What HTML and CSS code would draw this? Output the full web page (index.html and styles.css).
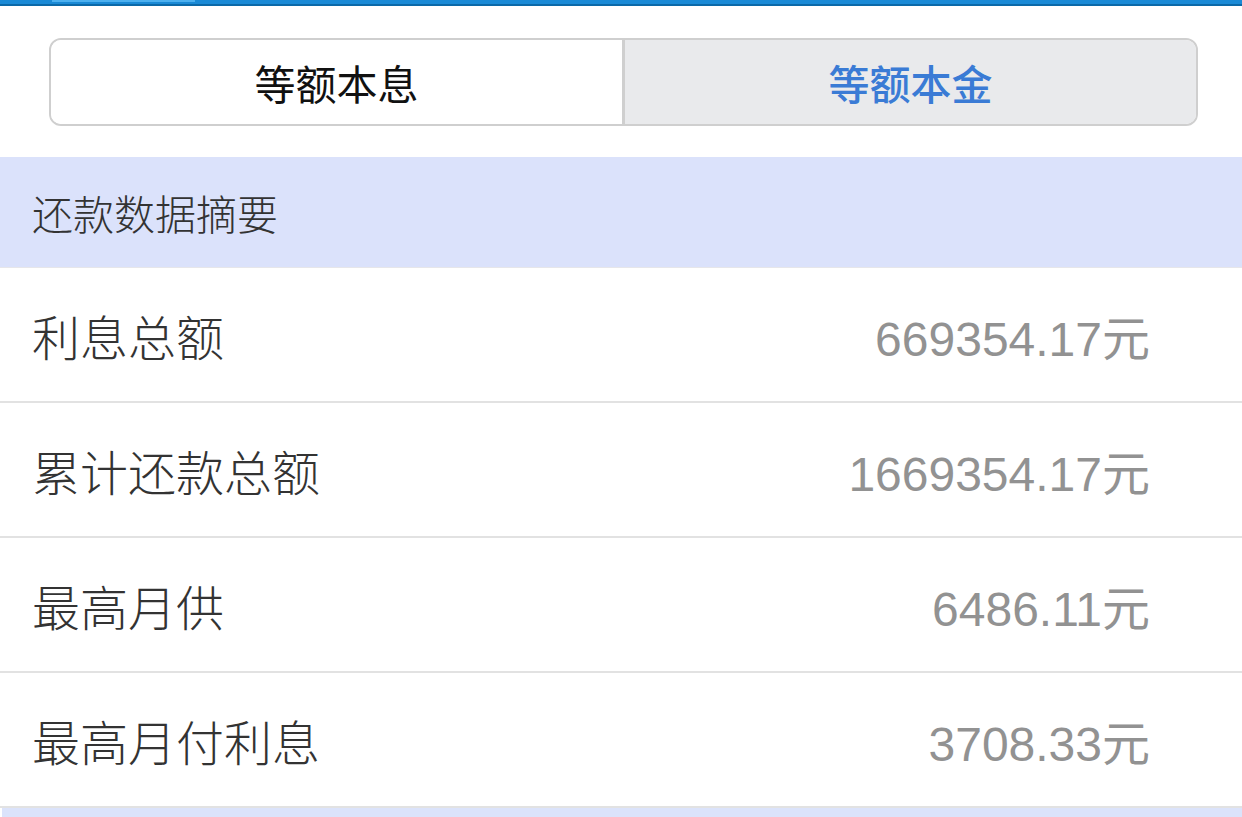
FILE: index.html
```html
<!DOCTYPE html>
<html lang="zh-CN">
<head>
    <meta charset="UTF-8">
    <meta name="viewport" content="width=device-width, initial-scale=1.0">
    <title>还款数据摘要</title>
    <link rel="stylesheet" href="styles.css">
</head>
<body>
    <div class="topbar">
        <div class="topbar-tab"></div>
    </div>
    <div class="segmented">
        <div class="segment">等额本息</div>
        <div class="segment active">等额本金</div>
    </div>
    <div class="summary">
        <div class="summary-header">还款数据摘要</div>
        <div class="row">
            <span class="label">利息总额</span>
            <span class="value">669354.17元</span>
        </div>
        <div class="row">
            <span class="label">累计还款总额</span>
            <span class="value">1669354.17元</span>
        </div>
        <div class="row">
            <span class="label">最高月供</span>
            <span class="value">6486.11元</span>
        </div>
        <div class="row">
            <span class="label">最高月付利息</span>
            <span class="value">3708.33元</span>
        </div>
    </div>
    <div class="next-section"></div>
</body>
</html>
```

FILE: styles.css
```css
body {
    margin: 0;
    background: #fff;
    font-family: 'Noto Sans CJK SC', 'Noto Sans', sans-serif;
    overflow: hidden;
}
.topbar {
    height: 4px;
    background: #1a8ad6;
    border-bottom: 2px solid #0b69a8;
    display: flex;
}
.topbar-tab {
    margin-left: 52px;
    width: 143px;
    height: 2px;
    background: #4cb0ef;
}
.segmented {
    display: flex;
    margin: 32px 44px 0 49px;
    height: 84px;
    border: 2px solid #cfcfcf;
    border-radius: 12px;
    overflow: hidden;
}
.segment {
    flex: 1;
    display: flex;
    align-items: center;
    justify-content: center;
    font-size: 41px;
    color: #111;
    background: #fff;
}
.segment.active {
    border-left: 3px solid #cfcfcf;
    background: #e9eaec;
    color: #3a7bd5;
    font-weight: 500;
}
.summary {
    margin-top: 31px;
}
.summary-header {
    height: 110px;
    background: #dbe2fb;
    border-bottom: 1px solid #e6e6ea;
    display: flex;
    align-items: center;
    padding-left: 32px;
    font-size: 41px;
    font-weight: 300;
    color: #333;
}
.row {
    height: 133px;
    border-bottom: 2px solid #e2e2e2;
    display: flex;
    align-items: center;
    justify-content: space-between;
    padding: 0 92px 0 32px;
}
.label {
    font-size: 48px;
    font-weight: 300;
    color: #333;
}
.value {
    font-family: 'Liberation Sans', 'Noto Sans CJK SC', sans-serif;
    font-size: 48px;
    color: #929292;
}
.next-section {
    height: 40px;
    margin-left: 2px;
    background: #dbe3fb;
}
```
